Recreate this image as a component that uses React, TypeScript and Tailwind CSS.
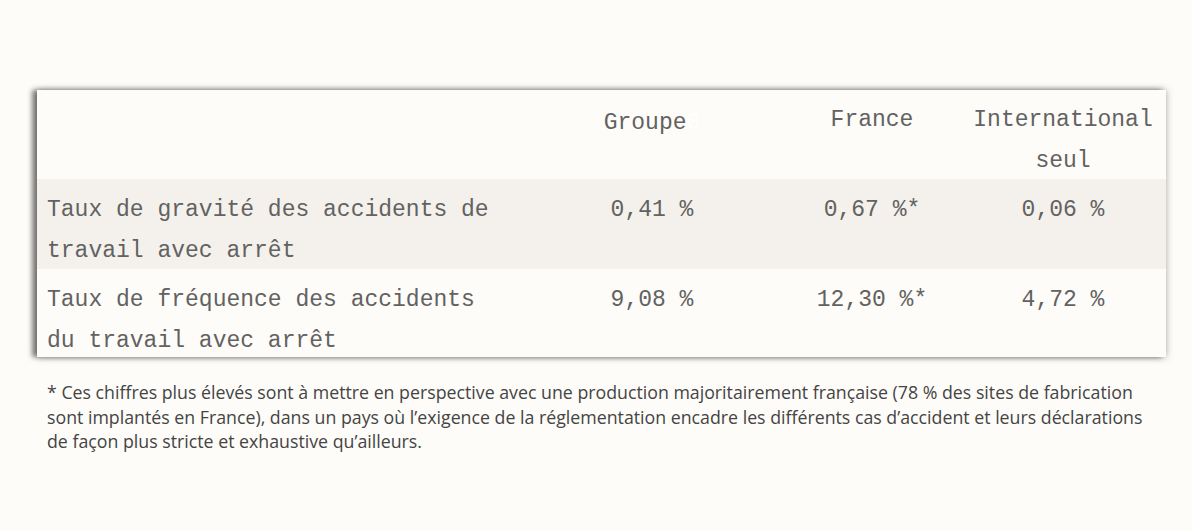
import React from "react";

const rows = [
  { label: ["Taux de gravité des accidents de", "travail avec arrêt"], groupe: "0,41 %", france: "0,67 %*", intl: "0,06 %", bg: "bg-[#f4f1ec]", h: "h-[90px]" },
  { label: ["Taux de fréquence des accidents", "du travail avec arrêt"], groupe: "9,08 %", france: "12,30 %*", intl: "4,72 %", bg: "bg-[#fefcf8]", h: "h-[88px]" },
];

export default function App() {
  return (
    <div className="min-h-[531px] w-[1192px] bg-[#fefcf8] pt-[90px] pl-[37px]">
      {/* table */}
      <div
        className="w-[1129px] bg-[#fefcf8] text-[#626262] text-[23px] leading-[41px] shadow-[-5px_0_5px_rgba(0,0,0,0.45),0_0_7px_rgba(0,0,0,0.35)]"
        style={{ fontFamily: '"Liberation Mono", "Courier New", monospace' }}
      >
        <div className="grid grid-cols-[483px_264px_176px_206px] h-[89px]">
          <div />
          <div className="text-center pt-[13px] whitespace-nowrap">
            Groupe<span className="text-white">0</span>
          </div>
          <div className="text-center pt-[10px]">France</div>
          <div className="text-center pt-[10px] whitespace-nowrap">
            International
            <br />
            seul
          </div>
        </div>
        {rows.map((r) => (
          <div key={r.groupe} className={`grid grid-cols-[483px_264px_176px_206px] ${r.h} ${r.bg}`}>
            <div className="pl-[10px] pt-[11px] whitespace-nowrap">
              {r.label[0]}
              <br />
              {r.label[1]}
            </div>
            <div className="text-center pt-[11px] whitespace-pre">{r.groupe}</div>
            <div className="text-center pt-[11px] whitespace-pre">{r.france}</div>
            <div className="text-center pt-[11px] whitespace-pre">{r.intl}</div>
          </div>
        ))}
      </div>

      {/* footnote */}
      <p
        className="mt-[23px] pl-[10px] text-[17.75px] leading-[24.5px] text-[#444] whitespace-nowrap"
        style={{ fontFamily: '"Open Sans", "Liberation Sans", sans-serif' }}
      >
        * Ces chiffres plus élevés sont à mettre en perspective avec une production majoritairement française (78 % des sites de fabrication
        <br />
        sont implantés en France), dans un pays où l’exigence de la réglementation encadre les différents cas d’accident et leurs déclarations
        <br />
        de façon plus stricte et exhaustive qu’ailleurs.
      </p>
    </div>
  );
}
